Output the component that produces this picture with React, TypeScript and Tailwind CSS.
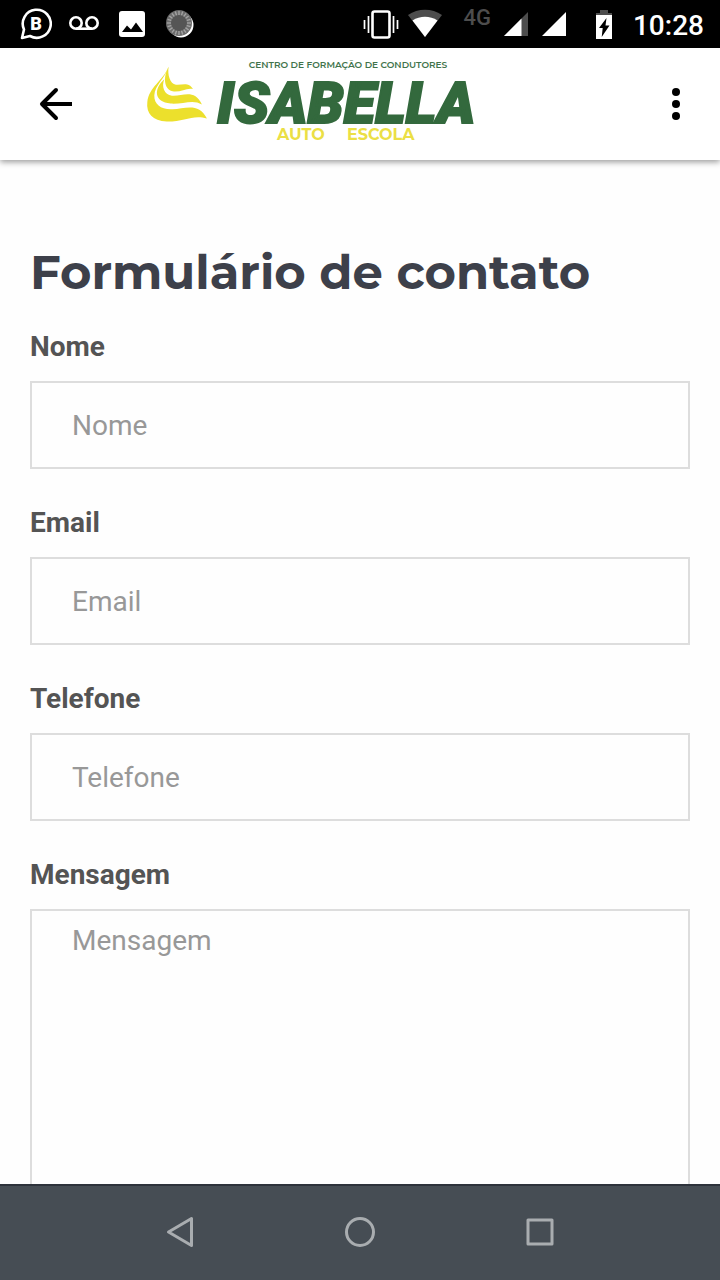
import type { ReactNode } from 'react';

interface Field {
  id: string;
  label: string;
  type: string;
}

const fields: Field[] = [
  { id: 'nome', label: 'Nome', type: 'text' },
  { id: 'email', label: 'Email', type: 'email' },
  { id: 'telefone', label: 'Telefone', type: 'tel' },
];

const rays = Array.from({ length: 20 }, (_, i) => i * 18);

function SignalIcon({ full = false }: { full?: boolean }) {
  return (
    <svg viewBox="0 0 26 26" className="w-[26px] h-[26px]" aria-hidden="true">
      <path d="M25 1v24H1z" fill={full ? '#fff' : '#4d4d4d'} />
      {!full && <path d="M18.500 7.500V25H1z" fill="#fff" />}
    </svg>
  );
}

function StatusBar() {
  return (
    <div className="h-12 shrink-0 bg-black text-white flex items-center justify-between pl-5 pr-4">
      <div className="flex items-center gap-4">
        <svg viewBox="0 0 32 32" className="size-8" fill="none" stroke="#fff" aria-hidden="true">
          <path d="M2 30l2-8.500A14 14 0 1 1 10 28z" strokeWidth="2.600" strokeLinejoin="round" />
          <text x="16" y="22" textAnchor="middle" fontFamily="Roboto, sans-serif" fontSize="18" fontWeight="900" fill="#fff" stroke="none">B</text>
        </svg>
        <svg viewBox="0 0 32 32" className="size-8" fill="none" stroke="#fff" strokeWidth="2.600" aria-hidden="true">
          <circle cx="8" cy="15" r="5.700" />
          <circle cx="24" cy="15" r="5.700" />
          <path d="M8 20.700h16" />
        </svg>
        <svg viewBox="0 0 32 32" className="size-8" aria-hidden="true">
          <rect x="3" y="3" width="26" height="26" rx="3" fill="#fff" />
          <path d="M6 24l5-6.500 4 4 5-7 7 9.500z" fill="#000" />
        </svg>
        <svg viewBox="0 0 32 32" className="size-8" aria-hidden="true">
          <circle cx="17" cy="17" r="12.500" fill="#fff" />
          <circle cx="15" cy="15" r="13" fill="#6b6b6b" />
          {rays.map((angle) => (
            <path key={angle} d="M15 3v4.500" stroke="#a3a3a3" strokeWidth="1.400" transform={`rotate(${angle} 15 15)`} />
          ))}
          <circle cx="15" cy="15" r="8" fill="#555" />
        </svg>
      </div>

      <div className="flex items-center">
        <svg viewBox="0 0 36 32" className="w-9 h-8" fill="none" stroke="#fff" aria-hidden="true">
          <rect x="9.500" y="3.500" width="17" height="26" rx="2" strokeWidth="2.600" />
          <path d="M5.500 8v17M30.500 8v17" strokeWidth="1.700" />
          <path d="M1.500 12v9M34.500 12v9" strokeWidth="1.700" />
        </svg>
        <svg viewBox="0 0 36 32" className="w-9 h-8 ml-2" aria-hidden="true">
          <path d="M1 7C11 0 25 0 35 7L18 29z" fill="#4d4d4d" />
          <path d="M5.500 12.500C13 7.500 23 7.500 30.500 12.500L18 29z" fill="#fff" />
        </svg>
        <span className="ml-5 pb-3 text-[22px] leading-6 font-medium text-[#4d4d4d]">4G</span>
        <div className="ml-3 flex gap-3">
          <SignalIcon />
          <SignalIcon full />
        </div>
        <svg viewBox="0 0 18 30" className="w-[18px] h-[30px] ml-7" aria-hidden="true">
          <path d="M5 1h8v3h4v3H1V4h4z" fill="#4d4d4d" />
          <path d="M1 6h16v24H1z" fill="#fff" />
          <path d="M11.500 9L4 19h3.700l-1 9L14.500 16.500H10.500z" fill="#000" />
        </svg>
        <span className="ml-5 pt-1 text-[28px] leading-8 font-medium">10:28</span>
      </div>
    </div>
  );
}

function Logo() {
  return (
    <svg viewBox="0 0 332 88" className="w-[332px] h-[88px]" role="img" aria-label="Isabella Auto Escola">
      <g transform="translate(-4 -4) scale(0.333)" fill="#ece02c">
        <path d="M86 32C82 55 90 84 108 86C126 88 146 76 159 99C140 94 122 110 98 106C70 98 70 60 86 32z" />
        <path d="M73 70C64 92 72 116 96 119C126 122 164 96 186 146C160 128 126 146 92 143C42 138 40 100 73 70z" />
        <path d="M86 32C76 66 44 88 43 118C42 146 64 162 98 160C134 158 178 138 201 188C160 174 132 198 80 197C38 194 18 172 22 138C27 92 68 76 86 32z" />
      </g>
      <text x="204" y="8" textAnchor="middle" fontFamily="Montserrat, sans-serif" fontSize="9" fontWeight="600" fill="#41734b">
        CENTRO DE FORMAÇÃO DE CONDUTORES
      </text>
      <text x="73" y="63" fontFamily="Roboto, sans-serif" fontSize="58" fontWeight="900" fontStyle="italic" fill="#33693d" stroke="#33693d" strokeWidth="2">
        ISABELLA
      </text>
      <g fontFamily="Montserrat, sans-serif" fontSize="16" fontWeight="700" fill="#ebdf45">
        <text x="133" y="80">AUTO</text>
        <text x="203" y="80">ESCOLA</text>
      </g>
    </svg>
  );
}

function Header() {
  return (
    <header className="relative z-10 h-28 shrink-0 bg-white shadow-[0_2px_6px_rgba(0,0,0,0.4)] flex items-center px-8">
      <button type="button" aria-label="Voltar" className="size-12 flex items-center justify-center">
        <svg viewBox="0 0 34 34" className="size-[34px]" fill="none" stroke="#000" strokeWidth="4" aria-hidden="true">
          <path d="M33 17H4" />
          <path d="M17 3L3 17l14 14" strokeLinejoin="round" strokeLinecap="round" />
        </svg>
      </button>
      <a href="#inicio" className="ml-16">
        <Logo />
      </a>
      <button type="button" aria-label="Mais opções" className="ml-auto w-6 h-12 flex items-center justify-center">
        <svg viewBox="0 0 8 32" className="w-2 h-8" aria-hidden="true">
          <circle cx="4" cy="4" r="4" />
          <circle cx="4" cy="16" r="4" />
          <circle cx="4" cy="28" r="4" />
        </svg>
      </button>
    </header>
  );
}

function FieldRow({ id, label, children }: { id: string; label: string; children: ReactNode }) {
  return (
    <div className="flex flex-col gap-3">
      <label htmlFor={id} className="text-[28px] leading-[44px] font-bold text-[#545454]">
        {label}
      </label>
      {children}
    </div>
  );
}

function ContactForm() {
  return (
    <form className="flex flex-col gap-8" onSubmit={(e) => e.preventDefault()}>
      {fields.map((field) => (
        <FieldRow key={field.id} id={field.id} label={field.label}>
          <input
            id={field.id}
            type={field.type}
            placeholder={field.label}
            className="w-full h-[88px] px-10 border-2 border-[#dddddd] text-[28px] text-[#545454] placeholder:text-[#989898] outline-none"
          />
        </FieldRow>
      ))}
      <FieldRow id="mensagem" label="Mensagem">
        <textarea
          id="mensagem"
          placeholder="Mensagem"
          className="w-full h-80 px-10 py-2 border-2 border-[#dddddd] text-[28px] leading-[44px] text-[#545454] placeholder:text-[#989898] outline-none resize-none"
        />
      </FieldRow>
    </form>
  );
}

function NavigationBar() {
  return (
    <nav className="h-24 shrink-0 pb-0.5 bg-[#464d54] border-t-2 border-[#2d323b] flex items-center justify-center gap-[148px]">
      <button type="button" aria-label="Voltar">
        <svg viewBox="0 0 32 32" className="size-8" fill="none" stroke="#a9adb0" strokeWidth="3" strokeLinejoin="round" aria-hidden="true">
          <path d="M27.500 2.500v27L4.500 16z" />
        </svg>
      </button>
      <button type="button" aria-label="Início">
        <svg viewBox="0 0 32 32" className="size-8" fill="none" stroke="#a9adb0" strokeWidth="3" aria-hidden="true">
          <circle cx="16" cy="16" r="13.500" />
        </svg>
      </button>
      <button type="button" aria-label="Recentes">
        <svg viewBox="0 0 32 32" className="size-8" fill="none" stroke="#a9adb0" strokeWidth="3" strokeLinejoin="round" aria-hidden="true">
          <rect x="4" y="4" width="24" height="24" />
        </svg>
      </button>
    </nav>
  );
}

export default function App() {
  return (
    <div className="h-dvh flex flex-col bg-[#fefefe] font-['Roboto',sans-serif]">
      <StatusBar />
      <Header />
      <main className="flex-1 min-h-0 overflow-y-auto [scrollbar-width:none] px-[30px] pt-20 pb-8">
        <h1 className="mb-[21px] font-['Montserrat',sans-serif] text-5xl leading-[64px] font-bold text-[#3d404a]">
          Formulário de contato
        </h1>
        <ContactForm />
      </main>
      <NavigationBar />
    </div>
  );
}
